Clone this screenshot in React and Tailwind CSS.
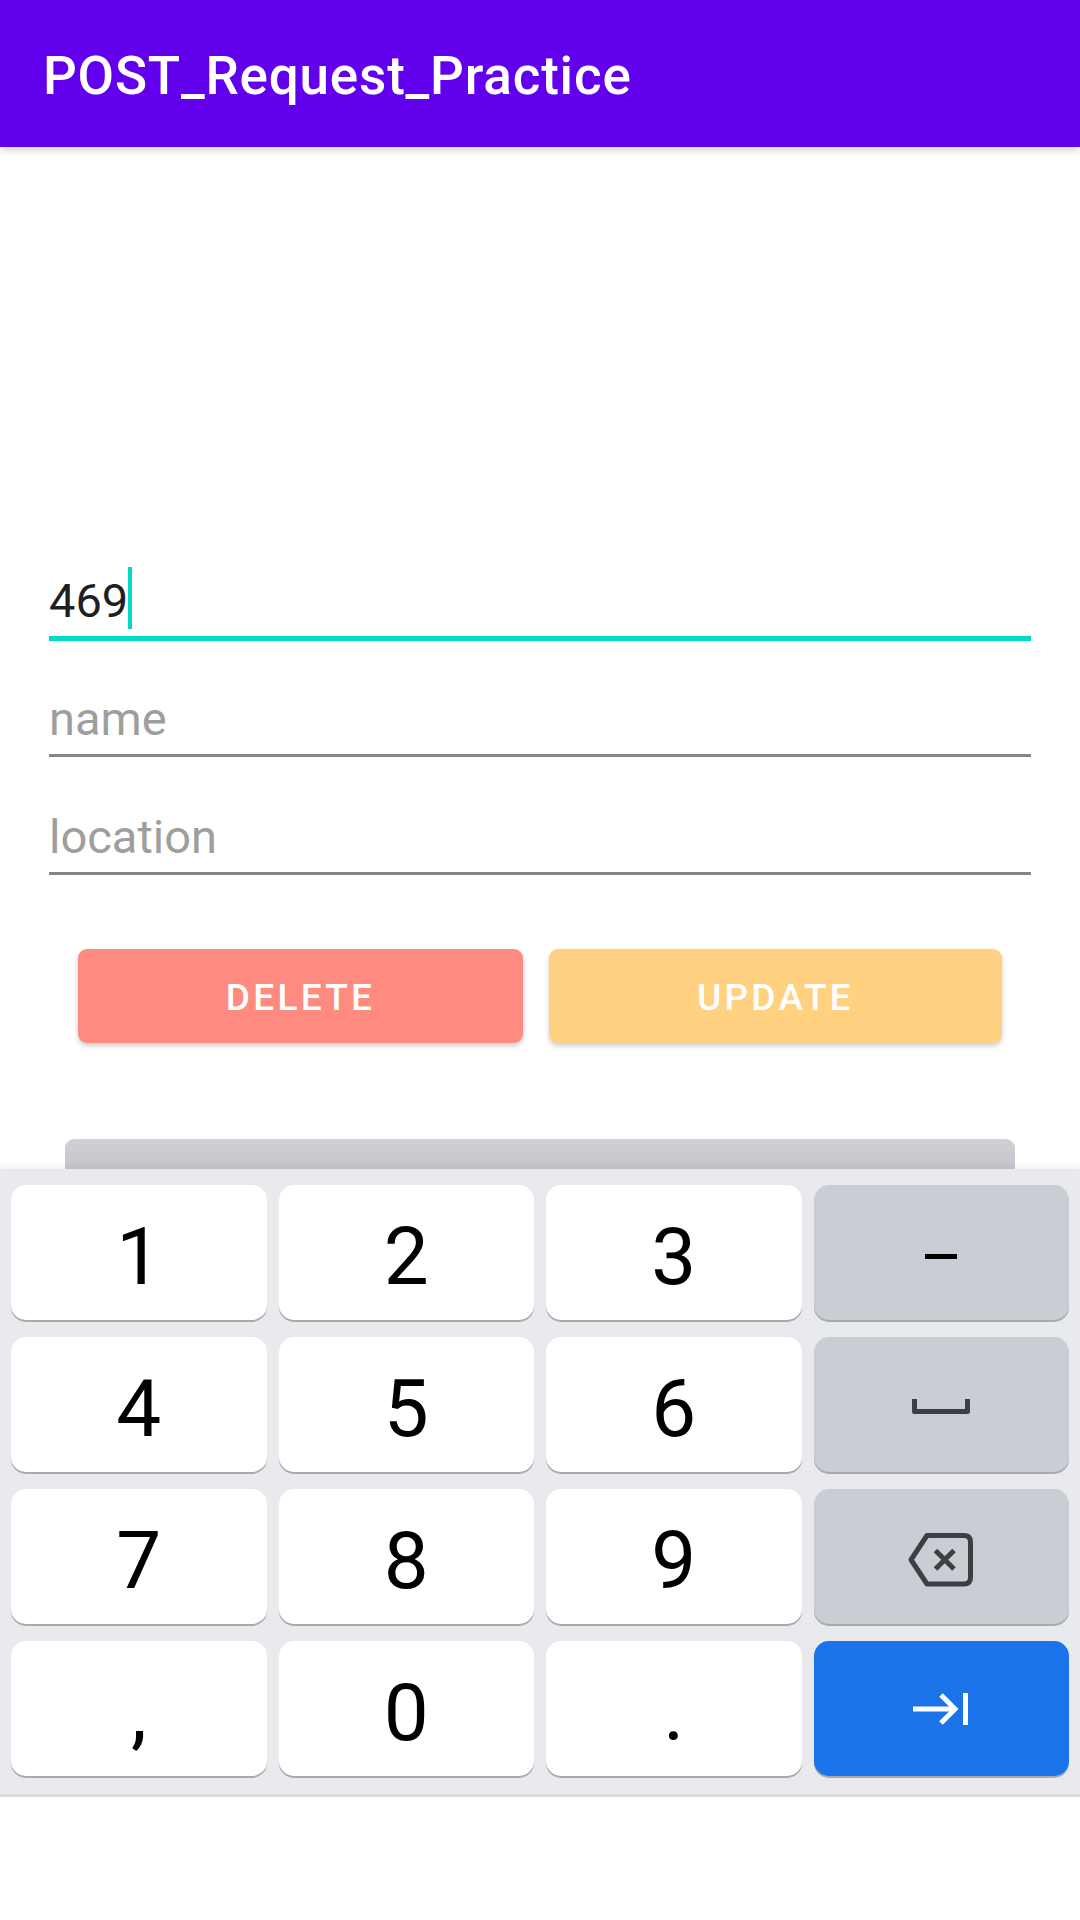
import React from "react";

function Key({ children, variant = "white" }) {
  const bg =
    variant === "white"
      ? "bg-white"
      : variant === "gray"
      ? "bg-[#cacdd4]"
      : "bg-[#1a73e8]";
  return (
    <div
      className={`${bg} h-[135px] rounded-[15px] shadow-[0_2px_0_#a8aaae] flex items-center justify-center text-[80px] leading-[94px] text-black font-normal`}
    >
      {children}
    </div>
  );
}

function Digit({ c }) {
  return (
    <Key>
      <span className="pt-[8px]">{c}</span>
    </Key>
  );
}

export default function App() {
  return (
    <div className="w-[1080px] h-[1920px] bg-white overflow-hidden font-['Roboto',sans-serif] flex flex-col">
      {/* App bar */}
      <div className="relative z-10 h-[147px] shrink-0 bg-[#6200ee] shadow-[0_3px_8px_rgba(0,0,0,0.18)] pl-[43px] pt-[45px]">
        <div className="text-white text-[53px] leading-[62px] font-medium tracking-[0.8px]">
          POST_Request_Practice
        </div>
      </div>

      {/* Field 1 (focused) */}
      <div className="ml-[49px] w-[982px] mt-[426px] pb-[8px] border-b-[5px] border-[#03dac5]">
        <div className="flex items-start h-[55px]">
          <span className="text-[47px] leading-[55px] text-[#1f1f1f]">469</span>
          <div className="w-[4px] h-[62px] -mt-[6px] bg-[#03dac5]" />
        </div>
      </div>

      {/* Field 2 */}
      <div className="ml-[49px] w-[982px] mt-[50px] pb-[8px] border-b-[3px] border-[#868686]">
        <div className="text-[47px] leading-[55px] text-[#9e9e9e]">name</div>
      </div>

      {/* Field 3 */}
      <div className="ml-[49px] w-[982px] mt-[52px] pb-[8px] border-b-[3px] border-[#868686]">
        <div className="text-[47px] leading-[55px] text-[#9e9e9e]">location</div>
      </div>

      {/* Buttons */}
      <div className="mt-[74px] flex justify-center gap-[26px]">
        <div className="w-[445px] h-[94px] rounded-[9px] bg-[#ff8a80] shadow-[0_3px_5px_rgba(0,0,0,0.2)] flex items-center justify-center pt-[4px]">
          <span className="text-white text-[37px] font-medium tracking-[3.3px]">DELETE</span>
        </div>
        <div className="w-[453px] h-[94px] rounded-[9px] bg-[#ffd180] shadow-[0_3px_5px_rgba(0,0,0,0.2)] flex items-center justify-center pt-[4px]">
          <span className="text-white text-[37px] font-medium tracking-[3.3px]">UPDATE</span>
        </div>
      </div>

      {/* Partially hidden button */}
      <div className="mt-[96px] ml-[65px] w-[950px] h-[30px] shrink-0 rounded-t-[9px] bg-gradient-to-b from-[#d1ced5] to-[#c8c5cc]" />

      {/* Keyboard */}
      <div className="relative z-10 shrink-0 bg-[#e8eaed] shadow-[0_-3px_6px_rgba(0,0,0,0.06)] pt-[16px] pb-[18px] px-[11px] border-b-[3px] border-[#dcdde0]">
        <div className="grid grid-cols-4 gap-x-[12px] gap-y-[17px]">
          <Digit c="1" />
          <Digit c="2" />
          <Digit c="3" />
          <Key variant="gray">
            <div className="w-[32px] h-[5px] mt-[8px] bg-black" />
          </Key>

          <Digit c="4" />
          <Digit c="5" />
          <Digit c="6" />
          <Key variant="gray">
            <svg width="58" height="16" viewBox="0 0 58 16" className="mt-[4px]">
              <path d="M2.5 0 V12.5 H55.5 V0" fill="none" stroke="#3c4043" strokeWidth="5" strokeLinejoin="round" />
            </svg>
          </Key>

          <Digit c="7" />
          <Digit c="8" />
          <Digit c="9" />
          <Key variant="gray">
            <svg width="66" height="54" viewBox="0 0 66 54" className="mt-[6px]">
              <path
                d="M19 2.5 H56 Q62.5 2.5 62.5 9 V44.5 Q62.5 51 56 51 H19 L3 26.75 Z"
                fill="none"
                stroke="#3c4043"
                strokeWidth="5"
                strokeLinejoin="round"
              />
              <path d="M27.5 17.5 L46 36 M46 17.5 L27.5 36" stroke="#3c4043" strokeWidth="5" />
            </svg>
          </Key>

          <Digit c="," />
          <Digit c="0" />
          <Digit c="." />
          <Key variant="blue">
            <svg width="56" height="34" viewBox="0 0 56 34" className="mt-[1px]">
              <path d="M0 17 H43" stroke="white" strokeWidth="5" />
              <path d="M28 3 L42 17 L28 31" fill="none" stroke="white" strokeWidth="5" />
              <rect x="50" y="1" width="5" height="32" fill="white" />
            </svg>
          </Key>
        </div>
      </div>
    </div>
  );
}
